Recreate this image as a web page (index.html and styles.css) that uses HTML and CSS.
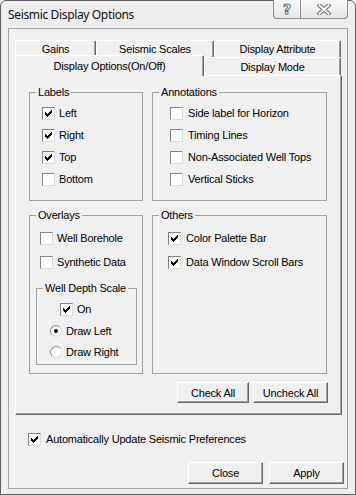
FILE: index.html
```html
<!DOCTYPE html>
<html>
<head>
  <title>Seismic Display Options</title>
  <link rel="stylesheet" href="styles.css">
</head>
<body>
  <div class="window">
    <div class="titlebar">
      <span class="title">Seismic Display Options</span>
      <div class="caption-buttons">
        <span class="cap-btn help">?</span>
        <span class="cap-btn close">
          <svg width="14" height="11" viewBox="0 0 14 11">
            <path d="M2.5 1.5L11.5 9.5M11.5 1.5L2.5 9.5" stroke="#707070" stroke-width="4" stroke-linecap="square"/>
            <path d="M2.5 1.5L11.5 9.5M11.5 1.5L2.5 9.5" stroke="#fdfdfd" stroke-width="2" stroke-linecap="square"/>
          </svg>
        </span>
      </div>
    </div>

    <div class="client">
      <div class="tabs">
        <div class="tab-row">
          <div class="tab w-gains">Gains</div>
          <div class="tab w-scales">Seismic Scales</div>
          <div class="tab w-attr">Display Attribute</div>
        </div>
        <div class="tab-row second">
          <div class="tab w-options active">Display Options(On/Off)</div>
          <div class="tab w-mode">Display Mode</div>
        </div>

        <div class="tab-panel">
          <div class="groups">
            <fieldset class="group labels">
              <legend>Labels</legend>
              <div class="opts">
                <label class="opt"><span class="cb"><svg viewBox="0 0 7 7"><path d="M0 2H1V3H2V4H3V3H4V2H5V1H6V0H7V3H6V4H5V5H4V6H3V7H2V6H1V5H0Z"/></svg></span>Left</label>
                <label class="opt"><span class="cb"><svg viewBox="0 0 7 7"><path d="M0 2H1V3H2V4H3V3H4V2H5V1H6V0H7V3H6V4H5V5H4V6H3V7H2V6H1V5H0Z"/></svg></span>Right</label>
                <label class="opt"><span class="cb"><svg viewBox="0 0 7 7"><path d="M0 2H1V3H2V4H3V3H4V2H5V1H6V0H7V3H6V4H5V5H4V6H3V7H2V6H1V5H0Z"/></svg></span>Top</label>
                <label class="opt"><span class="cb"></span>Bottom</label>
              </div>
            </fieldset>

            <fieldset class="group annotations">
              <legend>Annotations</legend>
              <div class="opts">
                <label class="opt"><span class="cb"></span>Side label for Horizon</label>
                <label class="opt"><span class="cb"></span>Timing Lines</label>
                <label class="opt"><span class="cb"></span>Non-Associated Well Tops</label>
                <label class="opt"><span class="cb"></span>Vertical Sticks</label>
              </div>
            </fieldset>

            <fieldset class="group overlays">
              <legend>Overlays</legend>
              <div class="opts">
                <label class="opt"><span class="cb"></span>Well Borehole</label>
                <label class="opt"><span class="cb"></span>Synthetic Data</label>
                <fieldset class="group depth">
                  <legend>Well Depth Scale</legend>
                  <div class="opts">
                    <label class="opt"><span class="cb"><svg viewBox="0 0 7 7"><path d="M0 2H1V3H2V4H3V3H4V2H5V1H6V0H7V3H6V4H5V5H4V6H3V7H2V6H1V5H0Z"/></svg></span>On</label>
                    <label class="opt radio"><span class="rb"><span class="dot"></span></span>Draw Left</label>
                    <label class="opt radio last"><span class="rb"></span>Draw Right</label>
                  </div>
                </fieldset>
              </div>
            </fieldset>

            <fieldset class="group others">
              <legend>Others</legend>
              <div class="opts">
                <label class="opt"><span class="cb"><svg viewBox="0 0 7 7"><path d="M0 2H1V3H2V4H3V3H4V2H5V1H6V0H7V3H6V4H5V5H4V6H3V7H2V6H1V5H0Z"/></svg></span>Color Palette Bar</label>
                <label class="opt"><span class="cb"><svg viewBox="0 0 7 7"><path d="M0 2H1V3H2V4H3V3H4V2H5V1H6V0H7V3H6V4H5V5H4V6H3V7H2V6H1V5H0Z"/></svg></span>Data Window Scroll Bars</label>
              </div>
            </fieldset>
          </div>

          <div class="panel-actions">
            <button class="btn check">Check All</button>
            <button class="btn uncheck">Uncheck All</button>
          </div>
        </div>
      </div>

      <label class="opt auto"><span class="cb"><svg viewBox="0 0 7 7"><path d="M0 2H1V3H2V4H3V3H4V2H5V1H6V0H7V3H6V4H5V5H4V6H3V7H2V6H1V5H0Z"/></svg></span>Automatically Update Seismic Preferences</label>

      <div class="dialog-actions">
        <button class="btn wide">Close</button>
        <button class="btn wide">Apply</button>
      </div>
    </div>
  </div>
</body>
</html>
```

FILE: styles.css
```css
body {
  margin: 0;
  font-family: "Liberation Sans", Arial, sans-serif;
  font-size: 11px;
  letter-spacing: -0.2px;
  color: #000;
  background: #fff;
}

.window {
  box-sizing: border-box;
  width: 356px;
  height: 495px;
  display: flex;
  flex-direction: column;
  padding: 0 7px 5px;
  background: #eeeeee;
  border: 1px solid #5f5f5f;
  border-radius: 6px 6px 0 0;
}

/* title bar */
.titlebar {
  flex-shrink: 0;
  height: 27px;
  display: flex;
  justify-content: space-between;
  align-items: flex-start;
}

.title {
  padding-top: 6px;
  font-family: "Noto Sans", sans-serif;
  font-size: 12px;
  line-height: 16px;
  letter-spacing: -0.35px;
  color: #111;
}

.caption-buttons {
  display: flex;
  margin-top: -1px;
}

.cap-btn {
  box-sizing: border-box;
  height: 19px;
  display: flex;
  align-items: center;
  justify-content: center;
  border: 1px solid #8e8e8e;
  border-top: none;
  background: linear-gradient(#f8f8f8, #e6e6e6);
}

.cap-btn.help {
  width: 28px;
  border-radius: 0 0 0 4px;
  font-family: "DejaVu Sans", sans-serif;
  font-size: 14px;
  font-weight: bold;
  color: #fdfdfd;
  -webkit-text-stroke: 1px #707070;
}

.cap-btn.close {
  width: 47px;
  border-left: none;
  border-radius: 0 0 4px 0;
}

/* client area */
.client {
  flex: 1;
  display: flex;
  flex-direction: column;
  padding: 11px 3px 0 6px;
  background: #f0f0f0;
  border: 1px solid #a5a5a5;
}

.tabs {
  width: 327px;
}

.tab-row {
  display: flex;
}

.tab {
  box-sizing: border-box;
  height: 17px;
  display: flex;
  align-items: center;
  justify-content: center;
  background: #f0f0f0;
  border: 1px solid;
  border-color: #fff #696969 transparent #fff;
  border-bottom: none;
  border-radius: 2px 2px 0 0;
  box-shadow: inset -1px 0 #a0a0a0;
}

.tab-row.second .tab {
  height: 18px;
}

.tab-row.second .tab.active {
  position: relative;
  z-index: 1;
  height: 21px;
  margin-top: -2px;
  margin-bottom: -1px;
  padding-bottom: 1px;
}

.w-gains { width: 81px; }
.w-scales { width: 118px; }
.w-attr { width: 127px; }
.w-options { width: 189px; }
.w-mode { width: 137px; }

.tab-panel {
  box-sizing: border-box;
  height: 340px;
  padding: 10px 13px 0;
  border: 1px solid;
  border-color: #fff #696969 #696969 #fff;
  box-shadow: inset -1px -1px #a0a0a0;
}

/* group boxes */
.groups {
  display: grid;
  grid-template-columns: 114px 175px;
  grid-template-rows: 115px 165px;
  gap: 8px 9px;
}

.group {
  box-sizing: border-box;
  min-width: 0;
  margin: 0;
  padding: 0;
  border: 1px solid #a3a3a3;
}

.group legend {
  margin-left: 6px;
  padding: 0 2px;
  line-height: 13px;
}

.opts {
  display: flex;
  flex-direction: column;
}

.opt {
  display: flex;
  align-items: center;
  gap: 4px;
  height: 22px;
  white-space: nowrap;
}

.labels .opts { padding: 3px 0 0 12px; }
.annotations .opts { padding: 3px 0 0 17px; }
.annotations .opt { gap: 5px; }

.overlays .opts { padding: 4px 0 0 10px; }
.overlays .opt,
.others .opt { height: 24px; }
.others .opts { padding: 4px 0 0 15px; }
.others .opt { gap: 5px; }

.group.depth {
  width: 101px;
  height: 83px;
  margin: 8px 0 0 -4px;
}

.overlays .depth .opts { padding: 3px 0 0 23px; }
.overlays .depth .opt { height: 22px; }
.overlays .depth .opt.radio { margin-left: -10px; }
.overlays .depth .opt.last { height: 20px; }

/* check boxes and radios */
.cb {
  box-sizing: border-box;
  flex-shrink: 0;
  width: 13px;
  height: 13px;
  display: inline-flex;
  align-items: center;
  justify-content: center;
  background: #fff;
  border: 1px solid;
  border-color: #858585 #dcdcdc #dcdcdc #858585;
}

.cb svg {
  width: 7px;
  height: 7px;
  fill: #000;
  shape-rendering: crispEdges;
}

.rb {
  box-sizing: border-box;
  flex-shrink: 0;
  width: 12px;
  height: 12px;
  display: inline-flex;
  align-items: center;
  justify-content: center;
  background: #fff;
  border: 1px solid;
  border-color: #8c8c8c #dedede #dedede #8c8c8c;
  border-radius: 50%;
}

.rb .dot {
  width: 4px;
  height: 4px;
  border-radius: 50%;
  background: #000;
}

/* buttons */
.btn {
  box-sizing: border-box;
  height: 21px;
  padding: 0;
  display: flex;
  align-items: center;
  justify-content: center;
  font: inherit;
  letter-spacing: inherit;
  color: #000;
  background: #f0f0f0;
  border: 1px solid;
  border-color: #fff #696969 #696969 #fff;
  box-shadow: inset -1px -1px #a0a0a0;
}

.panel-actions {
  display: flex;
  justify-content: flex-end;
  gap: 4px;
  margin-top: 8px;
}

.btn.check { width: 72px; }
.btn.uncheck { width: 75px; }

.opt.auto {
  margin: 13px 0 0 13px;
  gap: 5px;
}

.dialog-actions {
  display: flex;
  justify-content: flex-end;
  gap: 6px;
  margin-top: 12px;
}

.btn.wide {
  width: 75px;
  height: 22px;
}
```
